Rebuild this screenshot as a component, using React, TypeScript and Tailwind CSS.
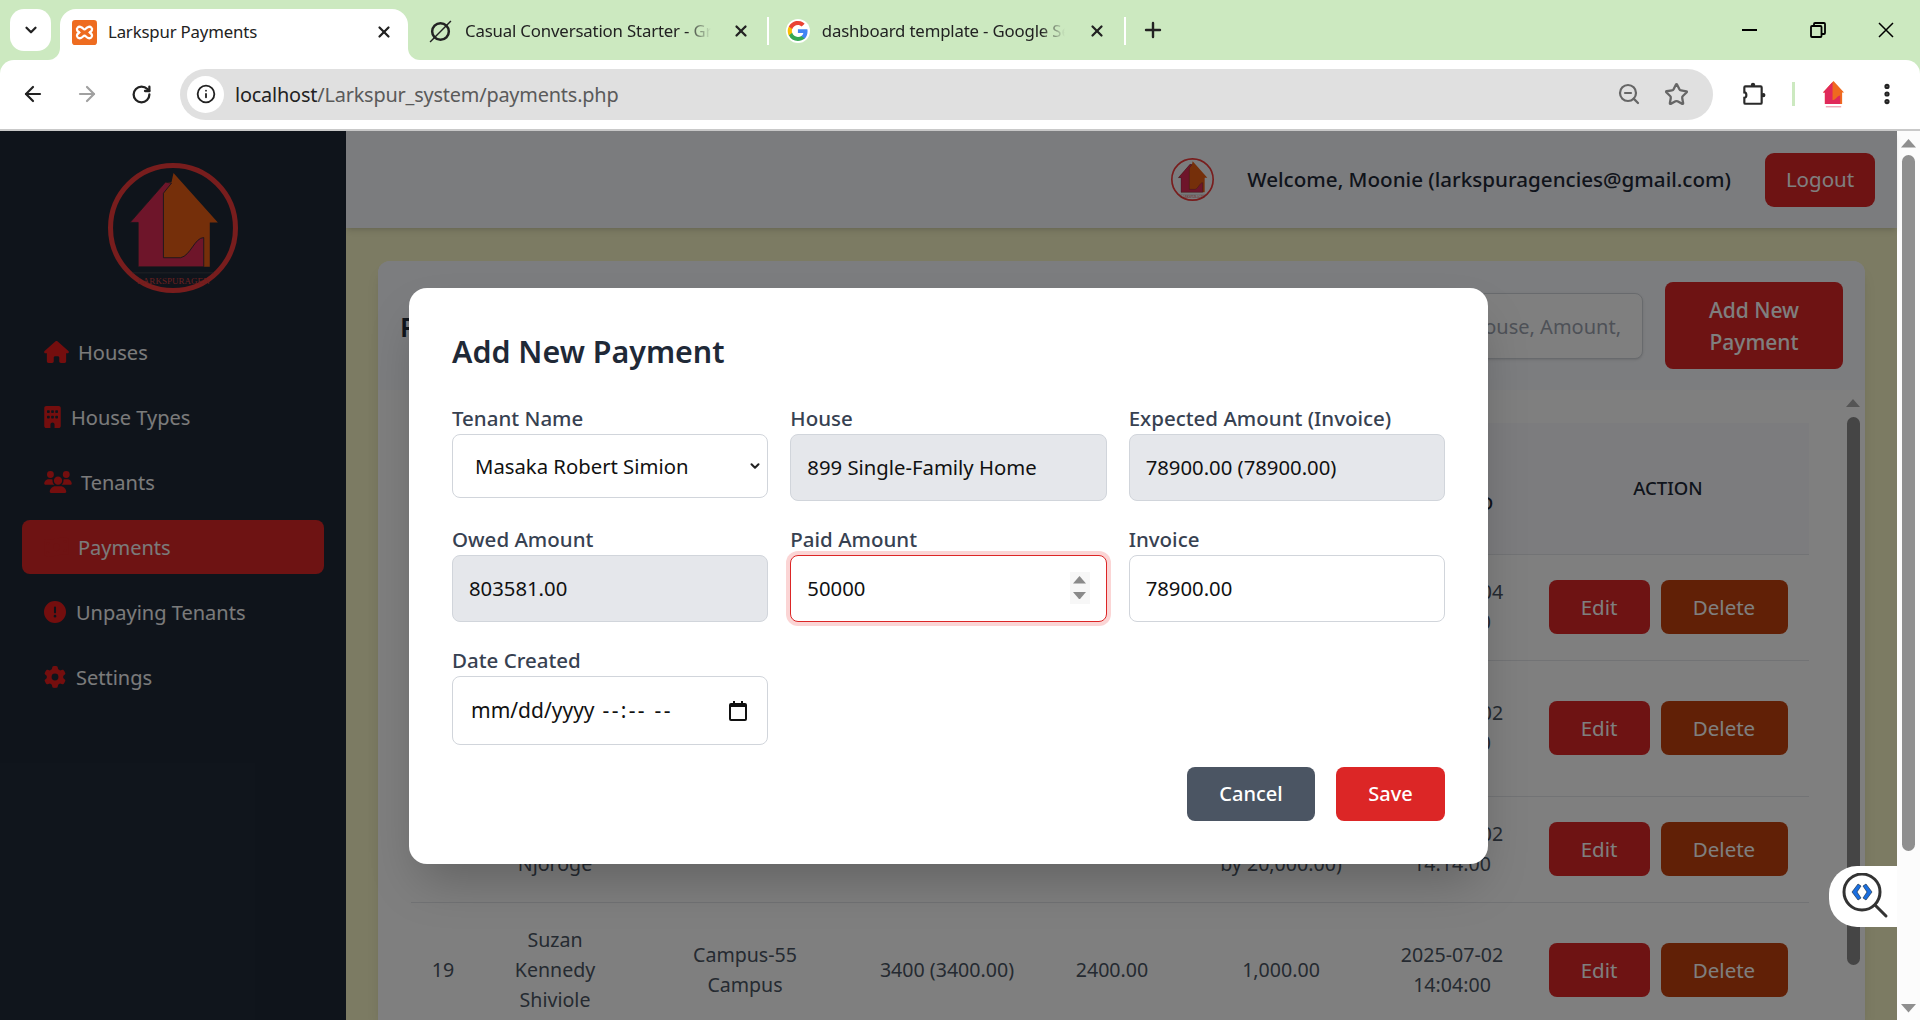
import React from 'react';
import {
  ArrowLeft,
  ArrowRight,
  ChevronDown,
  EllipsisVertical,
  Info,
  Plus,
  RotateCw,
  Star,
  X,
  ZoomOut,
} from 'lucide-react';
import {
  FaBuilding,
  FaCircleExclamation,
  FaGear,
  FaHouse,
  FaMoneyBillWave,
  FaUsers,
} from 'react-icons/fa6';

const LogoMark = ({ className }: { className: string }) => (
  <svg viewBox="0 0 129 129" className={className}>
    <circle cx="64.5" cy="64.5" r="62" fill="none" stroke="#f03a3a" strokeWidth="5" />
    <path d="M65 10 109 59h-8v44H30V59h-8L57 19h6z" fill="#ea5e14" />
    <path
      d="M22 59 57 19l6 1-8 10v64h17c10-2 14-20 23-20v29H30V59z"
      fill="#dc2a55"
      stroke="#1f2937"
      strokeWidth="0.8"
    />
    <line x1="24" y1="109" x2="105" y2="109" stroke="#555" strokeWidth="0.6" />
    <text x="65" y="120" textAnchor="middle" fontSize="9" fill="#d04040" fontFamily="Liberation Serif, serif">
      LARKSPURAGEN
    </text>
  </svg>
);

const TabFlare = ({ side }: { side: 'left' | 'right' }) => (
  <span
    className={
      side === 'left'
        ? 'absolute -left-3 bottom-0 size-3 bg-white'
        : 'absolute -right-3 bottom-0 size-3 bg-white'
    }
  >
    <span
      className={
        side === 'left'
          ? 'block size-full rounded-br-[12px] bg-[#cce9c0]'
          : 'block size-full rounded-bl-[12px] bg-[#cce9c0]'
      }
    />
  </span>
);

const GoogleIcon = () => (
  <svg viewBox="0 0 24 24" className="size-[24px] rounded-full bg-white p-[1px]">
    <path fill="#4285F4" d="M22.6 12.2c0-.8-.1-1.5-.2-2.2H12v4.3h6a5 5 0 0 1-2.2 3.3v2.8h3.6c2-1.9 3.2-4.7 3.2-8.2z" />
    <path fill="#34A853" d="M12 23c3 0 5.500-1 7.400-2.700l-3.600-2.800c-1 .7-2.300 1.100-3.800 1.100-2.900 0-5.400-2-6.300-4.600H2v2.800A11 11 0 0 0 12 23z" />
    <path fill="#FBBC05" d="M5.700 14a6.600 6.600 0 0 1 0-4.200V7H2a11 11 0 0 0 0 9.900z" />
    <path fill="#EA4335" d="M12 5.400c1.600 0 3.100.6 4.200 1.700l3.200-3.200A11 11 0 0 0 2 7l3.700 2.900C6.600 7.300 9.100 5.400 12 5.400z" />
  </svg>
);

const BrowserChrome = () => (
  <div className="h-[131px] shrink-0 bg-[#cce9c0]">
    <div className="flex h-[60px] items-end">
      <div className="mb-[9px] ml-[10px] flex h-[42px] w-[41px] items-center justify-center rounded-[14px] bg-white">
        <ChevronDown size={18} strokeWidth={3} className="text-[#222]" />
      </div>
      <div className="relative ml-[9px] flex h-[51px] w-[348px] items-center rounded-t-[16px] bg-white pb-[5px] pl-[12px]">
        <TabFlare side="left" />
        <TabFlare side="right" />
        <svg viewBox="0 0 24 24" className="size-[25px] shrink-0">
          <rect width="24" height="24" rx="3" fill="#ee6c20" />
          <path
            d="M9 7c-3-1.500-5 1-4 3 .5 1 1.500 1.500 2 2-.5.5-1.500 1-2 2-1 2 1 4.500 4 3 1.500-.7 2-2 3-2s1.500 1.300 3 2c3 1.500 5-1 4-3-.5-1-1.500-1.500-2-2 .5-.5 1.500-1 2-2 1-2-1-4.500-4-3-1.500.7-2 2-3 2s-1.500-1.300-3-2z"
            fill="none"
            stroke="#fff"
            strokeWidth="2.200"
          />
        </svg>
        <span className="ml-[11px] text-[16.800px] tracking-[-0.01em] text-[#222]">Larkspur Payments</span>
        <X size={18} strokeWidth={3} className="ml-auto mr-[15px] text-[#222]" />
      </div>
      <div className="mb-[11px] flex h-[36px] w-[361px] items-center pl-[20px]">
        <svg viewBox="0 0 24 24" className="size-[25px] shrink-0" fill="none" stroke="#222">
          <circle cx="12" cy="12" r="8" strokeWidth="2.400" />
          <line x1="2" y1="22" x2="22" y2="2" strokeWidth="1.400" />
        </svg>
        <span className="ml-[12px] w-[247px] overflow-hidden whitespace-nowrap text-[16.800px] tracking-[-0.01em] text-[#222] [mask-image:linear-gradient(90deg,#000_90%,transparent)]">
          Casual Conversation Starter - Grok
        </span>
        <X size={18} strokeWidth={3} className="ml-[21px] shrink-0 text-[#222]" />
        <span className="ml-[17px] h-[28px] w-[2px] shrink-0 bg-white" />
      </div>
      <div className="mb-[11px] flex h-[36px] w-[357px] items-center pl-[17px]">
        <GoogleIcon />
        <span className="ml-[12px] w-[245px] overflow-hidden whitespace-nowrap text-[16.800px] tracking-[-0.01em] text-[#222] [mask-image:linear-gradient(90deg,#000_90%,transparent)]">
          dashboard template - Google Search
        </span>
        <X size={18} strokeWidth={3} className="ml-[23px] shrink-0 text-[#222]" />
        <span className="ml-[18px] h-[28px] w-[2px] shrink-0 bg-white" />
      </div>
      <Plus size={24} strokeWidth={2.4} className="mb-[18px] ml-[15px] text-[#222]" />
      <div className="ml-auto flex h-[60px] items-center">
        <div className="flex w-[70px] justify-center">
          <span className="h-[2.500px] w-[15px] bg-black" />
        </div>
        <div className="flex w-[68px] justify-center">
          <svg viewBox="0 0 16 16" className="size-[16px]" fill="none" stroke="#000" strokeWidth="1.800">
            <rect x="1" y="4" width="10.500" height="11" rx="1" />
            <path d="M4 4V2a1 1 0 0 1 1-1h9a1 1 0 0 1 1 1v9a1 1 0 0 1-1 1h-2.500" />
          </svg>
        </div>
        <div className="flex w-[68px] justify-center">
          <svg viewBox="0 0 16 16" className="size-[16px]" stroke="#000" strokeWidth="1.500">
            <path d="M1 1 15 15M15 1 1 15" />
          </svg>
        </div>
      </div>
    </div>
    <div className="flex h-[71px] items-center rounded-t-[14px] border-b-2 border-[#c9c9c9] bg-white pb-[1px] pl-[6px]">
      <div className="flex w-[54px] justify-center">
        <ArrowLeft size={24} strokeWidth={2.200} className="text-[#222]" />
      </div>
      <div className="flex w-[54px] justify-center">
        <ArrowRight size={24} strokeWidth={2.200} className="text-[#a0a0a0]" />
      </div>
      <div className="flex w-[54px] justify-center">
        <RotateCw size={21} strokeWidth={2.600} className="text-[#222]" />
      </div>
      <div className="ml-[12px] flex h-[51px] w-[533px] grow items-center rounded-full bg-[#e0e0e0] pl-[7px] pr-[24px]">
        <div className="flex size-[37px] items-center justify-center rounded-full bg-white">
          <Info size={20} strokeWidth={2.200} className="text-[#222]" />
        </div>
        <span className="ml-[11px] pt-[1px] text-[19.900px] tracking-[-0.01em] text-[#222]">
          localhost<span className="text-[#5a5a5a]">/Larkspur_system/payments.php</span>
        </span>
        <ZoomOut size={24} strokeWidth={2.200} className="ml-auto text-[#666]" />
        <Star size={25} strokeWidth={2.200} className="ml-[23px] text-[#666]" />
      </div>
      <div className="flex w-[207px] items-center pl-[27px]">
        <svg viewBox="0 0 24 24" className="size-[26px]" fill="none" stroke="#2a2a2a" strokeWidth="2">
          <path d="M5 5h14a1 1 0 0 1 1 1v14a1 1 0 0 1-1 1H5a1 1 0 0 1-1-1v-4.500c2.500 0 2.500-5 0-5V6a1 1 0 0 1 1-1z" />
          <circle cx="12" cy="3.500" r="2" fill="#2a2a2a" stroke="none" />
          <circle cx="21.500" cy="13" r="2" fill="#2a2a2a" stroke="none" />
        </svg>
        <span className="ml-[26px] h-[24px] w-[3px] bg-[#cce9c0]" />
        <svg viewBox="0 0 24 30" className="ml-[27px] h-[29px] w-[23px]">
          <path d="M12 1 23 13h-2v12H3V13H1z" fill="#ef6a1f" />
          <path d="M1 13 11 2v19c3 0 5-5 8-5v9H3V13z" fill="#e0295a" />
          <rect x="4" y="27" width="16" height="1.500" fill="#f0a8b8" />
        </svg>
        <EllipsisVertical size={26} strokeWidth={2.800} className="ml-[29px] text-[#222]" />
      </div>
    </div>
  </div>
);

const navItems = [
  { label: 'Houses', icon: <FaHouse className="h-[22px] w-[25px]" />, gap: 'ml-[9px]' },
  { label: 'House Types', icon: <FaBuilding className="h-[22px] w-[17px]" />, gap: 'ml-[10px]' },
  { label: 'Tenants', icon: <FaUsers className="h-[22px] w-[28px]" />, gap: 'ml-[9px]' },
  { label: 'Payments', icon: <FaMoneyBillWave className="h-[22px] w-[25px]" />, gap: 'ml-[9px]', active: true },
  { label: 'Unpaying Tenants', icon: <FaCircleExclamation className="size-[22px]" />, gap: 'ml-[10px]' },
  { label: 'Settings', icon: <FaGear className="size-[22px]" />, gap: 'ml-[10px]' },
];

const Sidebar = () => (
  <aside className="flex w-[346px] shrink-0 flex-col items-center bg-[#1f2937] pt-[32px]">
    <LogoMark className="size-[130px]" />
    <nav className="mt-[32px] flex w-[302px] flex-col gap-[11px]">
      {navItems.map((item) => (
        <div
          key={item.label}
          className={
            item.active
              ? 'flex h-[54px] items-center rounded-[8px] bg-[#dc2626] pl-[22px] text-[#dc2626]'
              : 'flex h-[54px] items-center rounded-[8px] pl-[22px] text-[#e81c1c]'
          }
        >
          {item.icon}
          <span className={`${item.gap} pt-[2px] text-[20px] text-[#f6f6f6]`}>{item.label}</span>
        </div>
      ))}
    </nav>
  </aside>
);

const ActionButtons = () => (
  <div className="flex justify-center gap-[11px] pl-[2px] text-[20.500px] text-white">
    <button className="h-[54px] w-[101px] rounded-[8px] bg-[#dc2626]">Edit</button>
    <button className="h-[54px] w-[127px] rounded-[8px] bg-[#c2410c]">Delete</button>
  </div>
);

const rows = [
  {
    id: '22',
    tenant: 'Masaka Robert Simion',
    house: 'Single-Family Home',
    expected: '78900 (78900.00)',
    owed: '28900.00',
    paid: '50,000.00',
    date: '2025-07-04',
    time: '10:20:00',
    height: 'h-[106px]',
  },
  {
    id: '21',
    tenant: 'Mary Wanjiru Kamau',
    house: 'Campus-12 Campus',
    expected: '3400 (3400.00)',
    owed: '2400.00',
    paid: '1,000.00',
    date: '2025-07-02',
    time: '14:30:00',
    height: 'h-[136px]',
  },
  {
    id: '20',
    tenant: 'Peter Njoroge',
    house: 'Campus-20',
    expected: '20000 (20000.00)',
    owed: '0.00',
    paid: (
      <>
        40,000.00 (Overpaid
        <br />
        by 20,000.00)
      </>
    ),
    date: '2025-07-02',
    time: '14:14:00',
    height: 'h-[106px]',
  },
  {
    id: '19',
    tenant: 'Suzan Kennedy Shiviole',
    house: 'Campus-55 Campus',
    expected: '3400 (3400.00)',
    owed: '2400.00',
    paid: '1,000.00',
    date: '2025-07-02',
    time: '14:04:00',
    height: 'h-[136px]',
  },
];

const PaymentsTable = () => (
  <table className="w-[1398px] table-fixed border-collapse text-center text-[19.600px] leading-[30px] text-[#4b5563]">
    <colgroup>
      <col className="w-[62px]" />
      <col className="w-[164px]" />
      <col className="w-[216px]" />
      <col className="w-[188px]" />
      <col className="w-[142px]" />
      <col className="w-[196px]" />
      <col className="w-[146px]" />
      <col className="w-[284px]" />
    </colgroup>
    <thead>
      <tr className="h-[131px] bg-[#f8f9fd] text-[18.500px] font-medium uppercase leading-[30px] text-[#1f2937]">
        <th className="font-medium">#</th>
        <th className="font-medium">Tenant</th>
        <th className="font-medium">House</th>
        <th className="font-medium">Expected</th>
        <th className="font-medium">Owed</th>
        <th className="font-medium">Paid</th>
        <th className="pl-[4px] font-medium">
          Date
          <br />
          Created
        </th>
        <th className="pl-[2px] font-medium">Action</th>
      </tr>
    </thead>
    <tbody>
      {rows.map((row) => (
        <tr key={row.id} className={`${row.height} border-t border-[#e5e7eb]`}>
          <td className="pl-[2px]">{row.id}</td>
          <td className="px-[30px]">{row.tenant}</td>
          <td className="px-[30px]">{row.house}</td>
          <td>{row.expected}</td>
          <td>{row.owed}</td>
          <td>{row.paid}</td>
          <td>
            {row.date}
            <br />
            {row.time}
          </td>
          <td>
            <ActionButtons />
          </td>
        </tr>
      ))}
    </tbody>
  </table>
);

const Field = ({ label, children }: { label: string; children: React.ReactNode }) => (
  <div>
    <label className="-mt-[3px] mb-[3px] block h-[26px] text-[20.500px] font-medium leading-[26px] text-[#374151]">
      {label}
    </label>
    {children}
  </div>
);

const AddPaymentModal = () => (
  <div className="absolute inset-0 flex items-center justify-center bg-black/50">
    <div className="w-[1079px] rounded-[18px] bg-white px-[43px] pb-[43px] pt-[44px] shadow-2xl">
      <h2 className="mb-[36px] h-[40px] text-[30.400px] font-semibold leading-[40px] text-[#1f2937]">
        Add New Payment
      </h2>
      <div className="grid grid-cols-3 items-start gap-x-[22px] gap-y-[28px] text-[20.300px] text-[#111]">
        <Field label="Tenant Name">
          <div className="relative">
            <select className="h-[64px] w-full appearance-none rounded-[8px] border border-[#d1d5db] bg-white pl-[22px] pt-[2px] outline-none">
              <option>Masaka Robert Simion</option>
            </select>
            <ChevronDown
              size={14}
              strokeWidth={3.5}
              className="pointer-events-none absolute right-[6px] top-[25px] text-[#222]"
            />
          </div>
        </Field>
        <Field label="House">
          <input
            readOnly
            value="899 Single-Family Home"
            className="h-[67px] w-full rounded-[8px] border border-[#d1d5db] bg-[#e5e7eb] px-[16px] outline-none"
          />
        </Field>
        <Field label="Expected Amount (Invoice)">
          <input
            readOnly
            value="78900.00 (78900.00)"
            className="h-[67px] w-full rounded-[8px] border border-[#d1d5db] bg-[#e5e7eb] px-[16px] outline-none"
          />
        </Field>
        <Field label="Owed Amount">
          <input
            readOnly
            value="803581.00"
            className="h-[67px] w-full rounded-[8px] border border-[#d1d5db] bg-[#e5e7eb] px-[16px] outline-none"
          />
        </Field>
        <Field label="Paid Amount">
          <div className="relative">
            <input
              readOnly
              value="50000"
              className="h-[67px] w-full rounded-[8px] border-[1.500px] border-[#dc2626] bg-white px-[16px] outline-none ring-[4px] ring-[#fbd5d5]"
            />
            <span className="absolute right-[17px] top-[17px] flex h-[32px] w-[20px] flex-col items-center justify-center gap-[8px] bg-[#f7f7f7]">
              <svg viewBox="0 0 12 7" className="w-[13px]">
                <path d="M6 0 12 7H0z" fill="#8a8a8a" />
              </svg>
              <svg viewBox="0 0 12 7" className="w-[13px]">
                <path d="M0 0h12L6 7z" fill="#8a8a8a" />
              </svg>
            </span>
          </div>
        </Field>
        <Field label="Invoice">
          <input
            readOnly
            value="78900.00"
            className="h-[67px] w-full rounded-[8px] border border-[#d1d5db] bg-white px-[16px] outline-none"
          />
        </Field>
        <Field label="Date Created">
          <div className="relative flex h-[69px] w-full items-center rounded-[8px] border border-[#d1d5db] bg-white pl-[18px] pt-[2px] text-[21px]">
            <span>mm/dd/yyyy</span>
            <span className="ml-[8px] tracking-[0.11em]">--:-- --</span>
            <svg viewBox="0 0 18 20" className="absolute right-[20px] top-[24px] h-[20px] w-[18px]">
              <path d="M4 0h2v2h6V0h2v2h2a2 2 0 0 1 2 2v14a2 2 0 0 1-2 2H2a2 2 0 0 1-2-2V4a2 2 0 0 1 2-2h2z" fill="#111" />
              <rect x="2" y="6" width="14" height="12" fill="#fff" />
            </svg>
          </div>
        </Field>
      </div>
      <div className="mt-[22px] flex justify-end gap-[21px] text-[20px] font-medium text-white">
        <button className="h-[54px] w-[128px] rounded-[8px] bg-[#4b5563]">Cancel</button>
        <button className="h-[54px] w-[109px] rounded-[8px] bg-[#dc2626]">Save</button>
      </div>
    </div>
  </div>
);

const ScrollArrow = ({ down, className }: { down?: boolean; className: string }) => (
  <svg viewBox="0 0 14 8" className={className}>
    <path d={down ? 'M0 0h14L7 8z' : 'M7 0l7 8H0z'} fill="currentColor" />
  </svg>
);

const MainContent = () => (
  <main className="flex min-w-0 grow flex-col bg-[#f8f6c6]">
    <header className="flex h-[97px] shrink-0 items-center justify-end bg-[#f7f8fc] pr-[22px] shadow-md">
      <LogoMark className="size-[43px]" />
      <span className="ml-[33px] text-[20.600px] font-medium text-[#1f2937]">
        Welcome, Moonie (larkspuragencies@gmail.com)
      </span>
      <button className="ml-[34px] h-[54px] w-[110px] rounded-[9px] bg-[#dc2626] text-[20.500px] text-white">
        Logout
      </button>
    </header>
    <section className="mx-[32px] mt-[33px] min-h-0 grow overflow-hidden rounded-t-[12px] bg-white shadow-lg">
      <div className="flex h-[129px] items-center justify-between bg-[#f8fafe] pl-[22px] pr-[22px]">
        <h1 className="pt-[3px] text-[27px] font-semibold text-[#1f2937]">Payment Records</h1>
        <div className="flex items-center gap-[22px]">
          <input
            readOnly
            placeholder="Search Tenant, House, Amount,"
            className="h-[66px] w-[400px] rounded-[8px] border border-[#d1d5db] bg-white pl-[20px] pr-[21px] pt-[2px] text-right text-[20px] shadow-sm outline-none placeholder:text-[#9ca3af]"
          />
          <button className="h-[87px] w-[178px] rounded-[8px] bg-[#dc2626] text-[21px] font-medium leading-[32px] text-white">
            Add New
            <br />
            Payment
          </button>
        </div>
      </div>
      <div className="flex">
        <div className="grow pl-[33px] pt-[33px]">
          <PaymentsTable />
        </div>
        <div className="flex w-[21px] shrink-0 flex-col items-center pr-[3px] pt-[9px] text-[#aaa]">
          <ScrollArrow className="w-[14px]" />
          <div className="mt-[10px] h-[548px] w-[13px] rounded-full bg-[#8a8a8a]" />
        </div>
      </div>
    </section>
  </main>
);

export default function App() {
  return (
    <div className="flex h-[1020px] w-[1920px] flex-col overflow-hidden bg-white font-['Noto_Sans',sans-serif]">
      <BrowserChrome />
      <div className="flex min-h-0 grow">
        <div className="relative flex min-w-0 grow">
          <Sidebar />
          <MainContent />
          <AddPaymentModal />
          <div className="absolute right-0 top-[735px] flex h-[61px] w-[68px] items-center rounded-l-[28px] bg-white pl-[12px]">
            <svg viewBox="0 0 48 48" className="size-[48px]">
              <circle cx="21" cy="19" r="18" fill="none" stroke="#333" strokeWidth="3" />
              <path d="M34 32 45 43" stroke="#333" strokeWidth="3" strokeLinecap="round" />
              <path d="M17 11 11 19l6 8 3-2-4-6 4-6zM25 11l6 8-6 8-3-2 4-6-4-6z" fill="#1a6fe0" stroke="#123" strokeWidth="0.6" />
            </svg>
          </div>
        </div>
        <div className="flex w-[23px] shrink-0 flex-col items-center bg-[#fcfcfc] pt-[8px] text-[#8f8f8f]">
          <ScrollArrow className="w-[15px]" />
          <div className="mt-[7px] h-[696px] w-[13px] rounded-full bg-[#8f8f8f]" />
          <ScrollArrow down className="mt-auto mb-[7px] w-[15px]" />
        </div>
      </div>
    </div>
  );
}
